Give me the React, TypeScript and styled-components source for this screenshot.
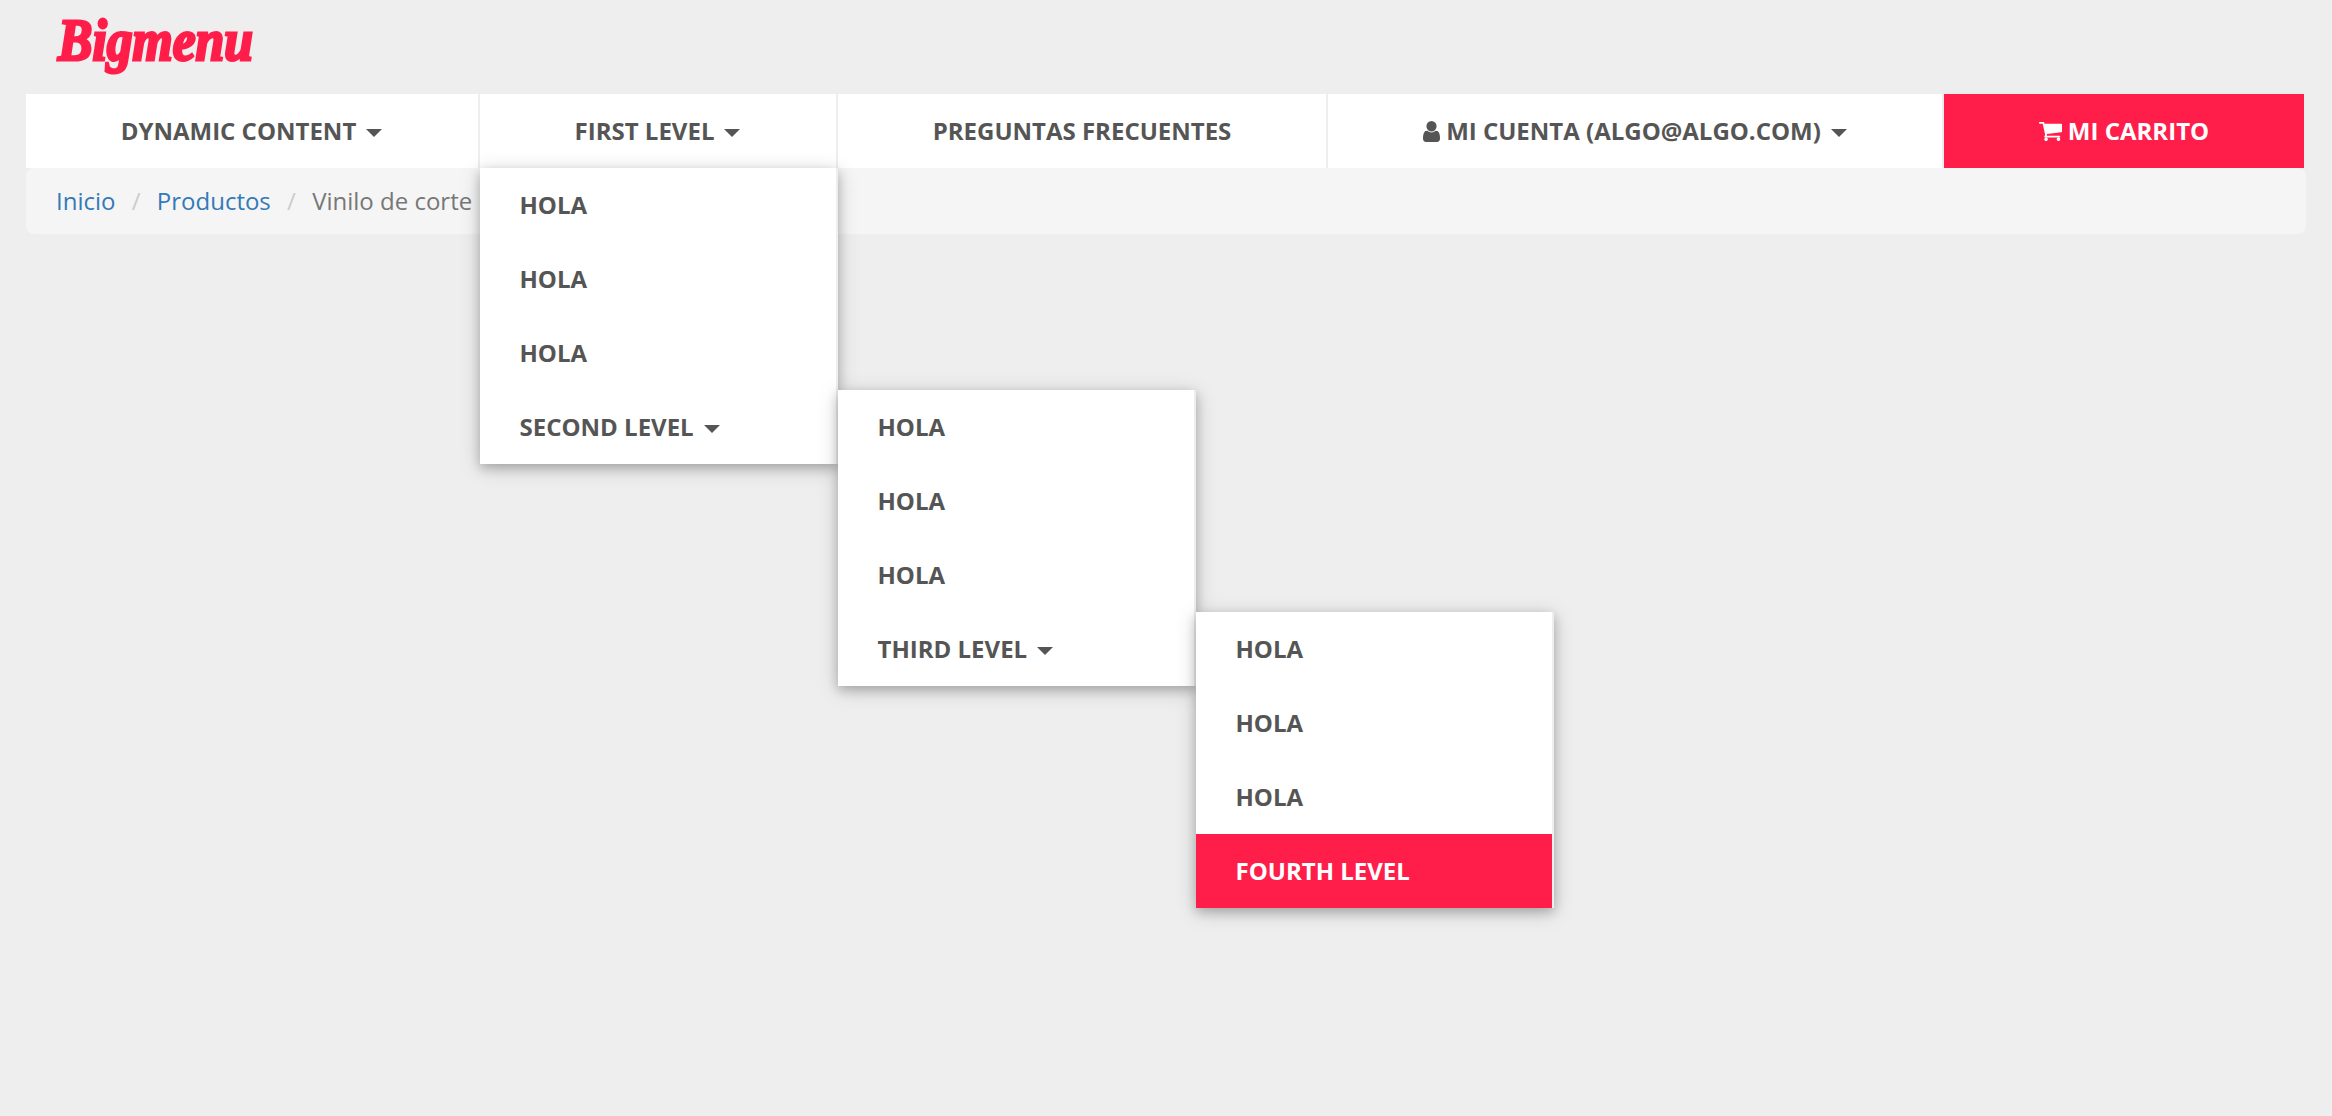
import React from "react";
import styled, { createGlobalStyle } from "styled-components";

const Global = createGlobalStyle`
  * { box-sizing: border-box; }
  body { margin: 0; background: #eee; color: #555; font: 24px/34px "Open Sans", sans-serif; }
`;
const Page = styled.div`
  height: 1116px;
  padding: 0 26px;
  overflow: hidden;
`;
const Header = styled.header`
  height: 94px;
  padding: 3px 0 0 32px;
`;
const Logo = styled.a`
  display: inline-block;
  font: italic 700 60px/74px "Liberation Serif", serif;
  color: #ff1d4a;
  -webkit-text-stroke: 3px #ff1d4a;
  transform: scaleX(0.86);
  transform-origin: 0 0;
`;
const Nav = styled.nav`
  display: grid;
  grid-template-columns: 454px 358px 490px 616px 362px;
  height: 74px;
`;
const NavItem = styled.div<{ $active?: boolean }>`
  position: relative;
  display: flex;
  align-items: center;
  justify-content: center;
  font-weight: 700;
  white-space: pre;
  color: ${(p) => (p.$active ? "#fff" : "#555")};
  background: ${(p) => (p.$active ? "#ff1d4a" : "#fff")};
  border-right: 2px solid #eee;
`;
const Caret = styled.span<{ $gap?: number }>`
  width: 0;
  margin: 3px ${(p) => p.$gap ?? 1}px 0 10px;
  border: 8px solid transparent;
  border-top-color: currentColor;
  border-bottom: 0;
`;
const Menu = styled.div<{ $sub?: boolean }>`
  position: absolute;
  z-index: 2;
  top: ${(p) => (p.$sub ? "0" : "100%")};
  left: ${(p) => (p.$sub ? "358px" : "0")};
  width: 358px;
  box-shadow: 0 4px 10px rgba(0, 0, 0, 0.2), 0 4px 20px rgba(0, 0, 0, 0.18);
`;
const MenuItem = styled(NavItem)`
  height: 74px;
  padding-left: 39.5px;
  justify-content: flex-start;
`;
const Icon = styled.svg<{ $w: number; $h: number }>`
  width: ${(p) => p.$w}px;
  height: ${(p) => p.$h}px;
  margin-right: 6px;
  fill: currentColor;
`;
const Breadcrumb = styled.ol`
  display: flex;
  height: 66px;
  margin: 0;
  padding: 16px 30px;
  list-style: none;
  border-radius: 8px;
  background: #f5f5f5;
  color: #777;
`;
const Crumb = styled.li`
  & + &::before { content: "/"; padding: 0 16.25px; color: #ccc; }
`;
const Link = styled.a`
  color: #337ab7;
`;

function Level({ titles, sub }: { titles: string[]; sub?: boolean }) {
  const [title, ...rest] = titles;
  const last = rest.length === 0;
  return (
    <Menu $sub={sub}>
      <MenuItem>HOLA</MenuItem>
      <MenuItem>HOLA</MenuItem>
      <MenuItem>HOLA</MenuItem>
      <MenuItem $active={last}>
        {title}
        {!last && <Caret />}
        {!last && <Level titles={rest} sub />}
      </MenuItem>
    </Menu>
  );
}

export default function App() {
  return (
    <Page>
      <Global />
      <Header>
        <Logo>Bigmenu</Logo>
      </Header>
      <Nav>
        <NavItem>DYNAMIC CONTENT<Caret /></NavItem>
        <NavItem>
          FIRST LEVEL<Caret />
          <Level titles={["SECOND LEVEL", "THIRD LEVEL", "FOURTH LEVEL"]} />
        </NavItem>
        <NavItem>PREGUNTAS FRECUENTES</NavItem>
        <NavItem>
          <Icon $w={17} $h={21} viewBox="256 128 1280 1536" preserveAspectRatio="none">
            <path d="M1536 1399q0 109-62.5 187t-150.5 78h-854q-88 0-150.5-78t-62.5-187q0-85 8.5-160.5t31.5-152 58.5-131 94-89 134.5-34.5q131 128 313 128t313-128q76 0 134.5 34.5t94 89 58.5 131 31.5 152 8.5 160.5zm-256-887q0 159-112.5 271.5t-271.5 112.5-271.5-112.5-112.5-271.5 112.5-271.5 271.5-112.5 271.5 112.5 112.5 271.5z" />
          </Icon>
          MI CUENTA (ALGO@ALGO.COM)<Caret $gap={0} />
        </NavItem>
        <NavItem $active>
          <Icon $w={23} $h={19} viewBox="64 256 1664 1408" preserveAspectRatio="none">
            <path d="M704 1536q0 52-38 90t-90 38-90-38-38-90 38-90 90-38 90 38 38 90zm896 0q0 52-38 90t-90 38-90-38-38-90 38-90 90-38 90 38 38 90zm128-1088v512q0 24-16.5 42.5t-40.5 21.5l-1044 122q13 60 13 70 0 16-24 64h920q26 0 45 19t19 45-19 45-45 19h-1024q-26 0-45-19t-19-45q0-11 8-31.5t16-36 21.5-40 15.5-29.5l-177-823h-204q-26 0-45-19t-19-45 19-45 45-19h256q16 0 28.5 6.5t19.5 15.5 13 24.5 8 26 5.5 29.5 4.5 26h1201q26 0 45 19t19 45z" />
          </Icon>
          MI CARRITO
        </NavItem>
      </Nav>
      <Breadcrumb>
        <Crumb><Link>Inicio</Link></Crumb>
        <Crumb><Link>Productos</Link></Crumb>
        <Crumb>Vinilo de corte</Crumb>
      </Breadcrumb>
    </Page>
  );
}
